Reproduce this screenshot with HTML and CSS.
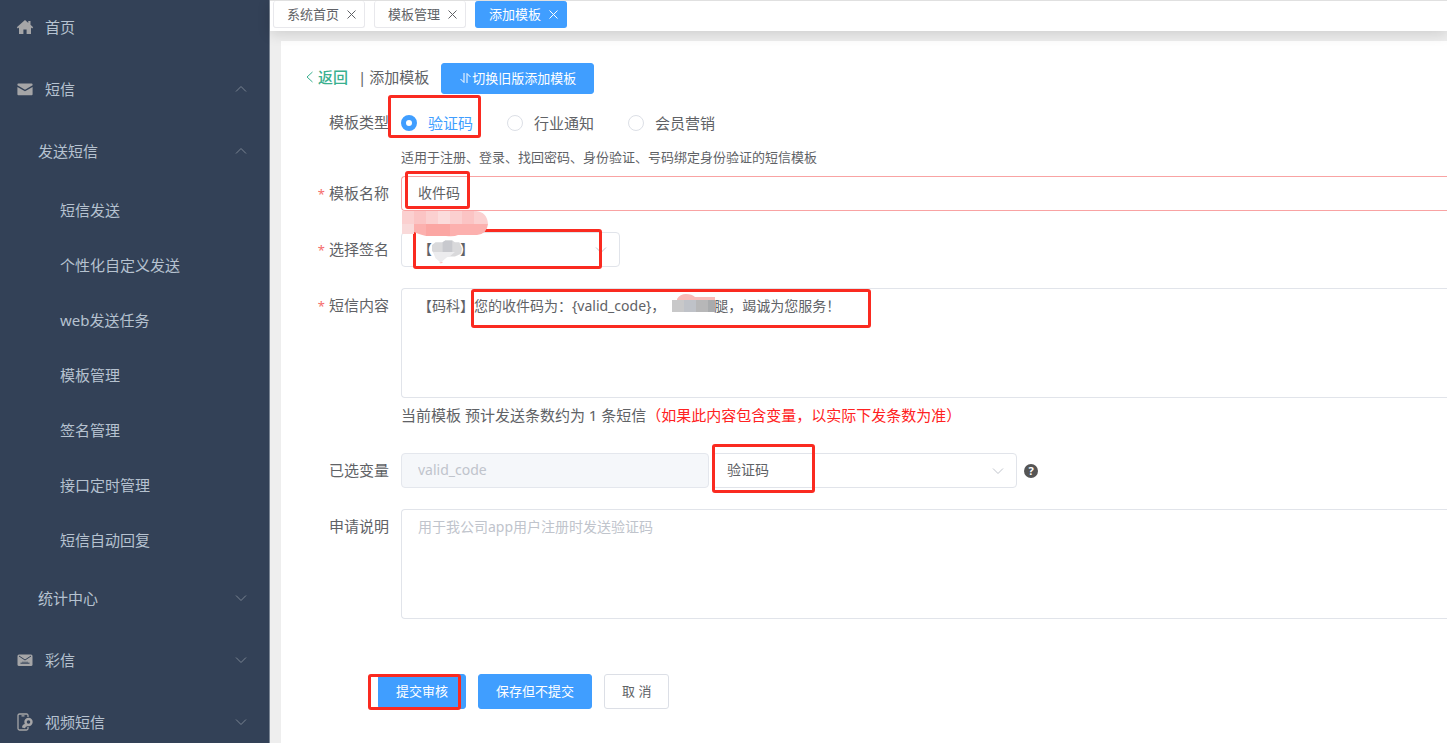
FILE: index.html
```html
<!DOCTYPE html>
<html lang="zh-CN">
<head>
<meta charset="utf-8">
<title>添加模板</title>
<link rel="stylesheet" href="styles.css">
</head>
<body>
<div class="app">
  <nav class="sidebar">
    <ul class="menu">
      <li><a class="item" href="#">
        <svg class="icon" viewBox="0 0 18 18"><path fill="currentColor" d="M9 2 .8 9.2l1.1 1.2L3 9.5V16h4.4v-4.6h3.2V16H15V9.5l1.1.9 1.1-1.2-2.7-2.4V3h-2.2v1.9z"/></svg>
        <span>首页</span></a></li>
      <li><a class="item" href="#">
        <svg class="icon" viewBox="0 0 18 18"><path fill="currentColor" d="M2.4 3.5h13.2q1 0 1 1v.8L9 9.8 1.400 5.300v-.8q0-1 1-1zM1.400 7 9 11.300 16.600 7v7.300q0 1-1 1H2.400q-1 0-1-1z"/></svg>
        <span>短信</span>
        <svg class="chevron" viewBox="0 0 12 8"><path d="M1 6.500 6 1.500l5 5"/></svg></a>
        <ul class="menu">
          <li><a class="item item-group" href="#"><span>发送短信</span>
            <svg class="chevron" viewBox="0 0 12 8"><path d="M1 6.500 6 1.500l5 5"/></svg></a>
            <ul class="menu">
              <li><a class="item item-leaf" href="#">短信发送</a></li>
              <li><a class="item item-leaf" href="#">个性化自定义发送</a></li>
              <li><a class="item item-leaf" href="#">web发送任务</a></li>
              <li><a class="item item-leaf" href="#">模板管理</a></li>
              <li><a class="item item-leaf" href="#">签名管理</a></li>
              <li><a class="item item-leaf" href="#">接口定时管理</a></li>
              <li><a class="item item-leaf" href="#">短信自动回复</a></li>
            </ul>
          </li>
          <li><a class="item item-group" href="#"><span>统计中心</span>
            <svg class="chevron" viewBox="0 0 12 8"><path d="m1 1.500 5 5 5-5"/></svg></a></li>
        </ul>
      </li>
      <li><a class="item" href="#">
        <svg class="icon" viewBox="0 0 18 18"><rect x="1.500" y="3.500" width="15" height="11.500" rx="1.500" fill="currentColor"/><path d="m3 5 6 4 6-4M4.500 12.200h9" fill="none" stroke="#334157" stroke-width="1"/><path d="M6 11.200h6" fill="none" stroke="#334157" stroke-width=".6"/></svg>
        <span>彩信</span>
        <svg class="chevron" viewBox="0 0 12 8"><path d="m1 1.500 5 5 5-5"/></svg></a></li>
      <li><a class="item" href="#">
        <svg class="icon" viewBox="0 0 18 18"><path d="M12 4V2.500q0-1.500-1.500-1.500H3.500Q2 1 2 2.500v13Q2 17 3.500 17h7q1.500 0 1.500-1.500V14M5.500 2.800h3" fill="none" stroke="currentColor" stroke-width="1.300"/><circle cx="12.500" cy="9" r="3" fill="none" stroke="currentColor" stroke-width="2.400"/><path d="M6 14.500q0-3 3.500-3.800l2 2.500q-2 .2-2.500 2z" fill="currentColor"/></svg>
        <span>视频短信</span>
        <svg class="chevron" viewBox="0 0 12 8"><path d="m1 1.500 5 5 5-5"/></svg></a></li>
    </ul>
  </nav>

  <div class="main">
    <header class="tabs">
      <a class="tab" href="#">系统首页<svg class="close" viewBox="0 0 9 9"><path d="m.5.5 8 8m0-8-8 8"/></svg></a>
      <a class="tab" href="#">模板管理<svg class="close" viewBox="0 0 9 9"><path d="m.5.5 8 8m0-8-8 8"/></svg></a>
      <a class="tab tab-active" href="#">添加模板<svg class="close" viewBox="0 0 9 9"><path d="m.5.5 8 8m0-8-8 8"/></svg></a>
    </header>

    <main class="card">
      <div class="head">
        <a class="back" href="#"><svg class="back-arrow" viewBox="0 0 8 12"><path d="M7 1 1.500 6 7 11"/></svg>返回</a>
        <h1 class="title"><span>|</span><span>添加模板</span></h1>
        <button class="btn btn-primary btn-switch" type="button"><svg class="switch-icon" viewBox="0 0 12 12"><path d="M4.500 1v9.500L1 7M7.500 11V1.500L11 5"/></svg>切换旧版添加模板</button>
      </div>

      <form class="form">
        <div class="row row-type">
          <span class="label" id="type-label">模板类型</span>
          <div class="radios" role="radiogroup" aria-labelledby="type-label">
            <label class="radio"><input type="radio" name="type" checked><span>验证码</span><i class="mark mark-type"></i></label>
            <label class="radio"><input type="radio" name="type"><span>行业通知</span></label>
            <label class="radio"><input type="radio" name="type"><span>会员营销</span></label>
          </div>
        </div>
        <p class="tip">适用于注册、登录、找回密码、身份验证、号码绑定身份验证的短信模板</p>

        <div class="row row-name">
          <label class="label required" for="name">模板名称</label>
          <div class="field">
            <input class="control control-error" id="name" type="text" value="收件码">
            <svg class="mosaic mosaic-error" viewBox="0 0 86 27">
              <path fill="#fbd0d0" d="M0 1h74q11 1 12 13H0z"/><path fill="#f9dada" d="M0 14h12v10H0z"/>
              <path fill="#fcb0ae" d="M12 14h74q-1 10-11 11H56q-4 2-12 1H24q-8-2-12-4z"/>
              <path fill="#fbc4c4" d="M12 1h12v13H12zM60 1h12v13H60z"/><path fill="#fbdcdc" d="M36 1h12v13H36z"/><path fill="#fba6a3" d="M24 14h24v12H24z"/>
            </svg>
            <i class="mark mark-name"></i>
          </div>
        </div>

        <div class="row">
          <label class="label required" for="sign">选择签名</label>
          <div class="field field-select field-sign">
            <select class="control" id="sign"><option>【　　】</option></select>
            <svg class="arrow" viewBox="0 0 12 8"><path d="m1 1.500 5 5 5-5"/></svg>
            <svg class="mosaic mosaic-sign" viewBox="0 0 34 26">
              <path fill="#d9d9db" d="m0 5 4-3h8l3-2h8l3 2h5l3 7-1 6-7 3H6L0 12z"/><path fill="#c8c9ce" d="M12 2 15 0h8v13H12z"/>
              <path fill="#ececee" d="M1 13h25l-6 5-3 1-7 6-6-5z"/><path fill="#f3b9b5" d="m8 24 2 1 2-1v1l-2 1z"/>
            </svg>
            <i class="mark mark-sign"></i>
          </div>
        </div>

        <div class="row">
          <label class="label required" for="content">短信内容</label>
          <div class="field">
            <textarea class="control area" id="content">【码科】您的收件码为：{valid_code}，　　　　腿，竭诚为您服务！</textarea>
            <svg class="mosaic mosaic-content" viewBox="0 0 44 19">
              <path fill="#f7bdba" d="M5 5q3-5 9-5t9 3h20v3H5z"/><path fill="#c8c8c9" d="M0 6h12v12H0z"/><path fill="#bfc2c8" d="M12 6h12v12H12z"/><path fill="#b7b7b8" d="M24 6h12v12H24z"/><path fill="#a9abad" d="M36 6h7v12h-7z"/>
            </svg>
            <i class="mark mark-content"></i>
          </div>
        </div>
        <p class="count">当前模板 预计发送条数约为 1 条短信<span class="warn">（如果此内容包含变量，以实际下发条数为准）</span></p>

        <div class="row row-var">
          <label class="label" for="var-type">已选变量</label>
          <div class="var-group">
            <input class="control var-name" type="text" value="valid_code" aria-label="变量名" disabled>
            <div class="field field-select field-var">
              <select class="control" id="var-type"><option>验证码</option></select>
              <svg class="arrow" viewBox="0 0 12 8"><path d="m1 1.500 5 5 5-5"/></svg>
              <i class="mark mark-var"></i>
            </div>
            <span class="help">?</span>
          </div>
        </div>

        <div class="row">
          <label class="label" for="remark">申请说明</label>
          <div class="field"><textarea class="control area area-remark" id="remark" placeholder="用于我公司app用户注册时发送验证码"></textarea></div>
        </div>

        <div class="actions">
          <div class="submit"><button class="btn btn-primary" type="button">提交审核</button><i class="mark mark-submit"></i></div>
          <button class="btn btn-primary" type="button">保存但不提交</button>
          <button class="btn" type="button">取 消</button>
        </div>
      </form>
    </main>
  </div>
</div>
</body>
</html>
```
FILE: styles.css
```css
* { box-sizing: border-box; }

body {
  margin: 0;
  overflow: hidden;
  background: #eee;
  color: #606266;
  font: 15px/20px "Noto Sans", "Noto Sans CJK SC", sans-serif;
}

a { color: inherit; text-decoration: none; }
button, input, select, textarea { font-family: inherit; }

.app { display: flex; height: 100vh; overflow: hidden; }

/* Sidebar */
.sidebar {
  flex: none;
  width: 270px;
  background: #334157;
  border-right: 1px solid #7a8594;
  color: #b6c2d0;
  overflow: hidden;
}
.menu { list-style: none; margin: 0; padding: 0; }
.sidebar > .menu { margin-top: -4px; }
.item {
  display: flex;
  align-items: center;
  height: 62px;
  padding: 0 22px 0 16px;
}
.item-group { padding-left: 38px; }
.item-leaf { height: 55px; padding-left: 60px; }
.icon { width: 18px; height: 18px; margin-right: 11px; color: #a5a5a7; }
.chevron {
  width: 12px;
  height: 8px;
  margin-left: auto;
  fill: none;
  stroke: #7a8492;
  stroke-width: 1;
}

/* Tabs */
.main { flex: 1; min-width: 0; display: flex; flex-direction: column; }
.tabs {
  position: relative;
  display: flex;
  gap: 9px;
  height: 31px;
  padding: 0 3px 3px;
  background: #fff;
  border-top: 1px solid #e0e0e0;
  box-shadow: 0 3px 14px rgba(0, 0, 0, .14);
}
.tab {
  display: flex;
  align-items: center;
  gap: 8px;
  padding: 0 8px 0 13px;
  border: 1px solid #e8e8ec;
  border-top: 0;
  border-radius: 3px;
  font-size: 13px;
}
.tab-active { background: #409eff; border-color: #409eff; color: #fff; }
.close { width: 9px; height: 9px; fill: none; stroke: currentColor; stroke-width: 1; }

/* Card */
.card {
  flex: 1;
  margin: 10px 0 0 11px;
  padding: 22px 0 0 24px;
  background: #fff;
}
.head { display: flex; align-items: center; height: 31px; line-height: 28px; }
.back, .title { height: 31px; }
.back { display: flex; align-items: center; gap: 4px; padding-bottom: 3px; color: #39b08f; font-weight: 500; }
.back-arrow { width: 9px; height: 12px; fill: none; stroke: currentColor; stroke-width: 1; }
.title { display: flex; gap: 3px; margin: 0 12px 0 10px; font-size: 15px; font-weight: 400; }

.btn {
  height: 35px;
  padding: 0 17px 2px;
  border: 1px solid #dcdfe6;
  border-radius: 3px;
  background: #fff;
  color: #606266;
  font-size: 13px;
}
.btn-primary { background: #409eff; border-color: #409eff; color: #fff; }
.btn-switch { display: flex; align-items: center; height: 31px; }
.switch-icon { width: 13px; height: 12px; fill: none; stroke: currentColor; stroke-width: 1; }

/* Form */
.form { margin: 0; }
.row {
  display: grid;
  grid-template-columns: 84px minmax(0, 1fr);
  column-gap: 12px;
  margin-top: 21px;
}
.label { height: 35px; text-align: right; line-height: 34px; white-space: nowrap; }
.required::before { content: "*"; margin-right: 4px; color: #f56c6c; font-size: 13px; }

.row-type { margin-top: 14px; height: 30px; }
.row-type .label { height: 30px; line-height: 29px; }
.radios { display: flex; gap: 34px; height: 30px; }
.radio { position: relative; display: flex; align-items: center; gap: 11px; }
.radio input {
  appearance: none;
  width: 16px;
  height: 16px;
  margin: 0;
  border: 1px solid #dcdfe6;
  border-radius: 50%;
  background: #fff;
}
.radio input:checked { border: 5px solid #409eff; }
.radio input:checked + span { color: #409eff; }

.tip { margin: 9px 0 0 96px; font-size: 13px; }
.row-name { margin-top: 9px; }

.field { position: relative; display: flex; }
.control {
  width: 100%;
  height: 35px;
  padding: 0 16px 3px;
  border: 1px solid #e1e4ea;
  border-radius: 4px;
  outline: 0;
  background: #fff;
  color: #606266;
  font-size: 14px;
  appearance: none;
}
.field > input.control, .field > .area { border-right: 0; border-radius: 4px 0 0 4px; }
.control-error { border-color: #f9a3a3; }
.area { height: 110px; padding-top: 7px; line-height: 20px; resize: none; }
.area::placeholder { color: #c0c4cc; }
.field-sign { width: 219px; }
.arrow {
  position: absolute;
  top: 14px;
  right: 13px;
  width: 12px;
  height: 8px;
  fill: none;
  stroke: #c0c4cc;
}

.count { margin: 7px 0 0 96px; }
.warn { color: #f22; }

.row-var { margin-top: 28px; }
.var-group { display: flex; align-items: center; }
.var-name { width: 308px; margin-right: 3px; }
.var-name:disabled { background: #f5f7fa; border-color: #e4e7ed; color: #c0c4cc; }
.field-var { width: 305px; }
.field-var .control { padding-left: 14px; }
.help {
  width: 14px;
  height: 14px;
  margin-left: 7px;
  border-radius: 50%;
  background: #555;
  color: #fff;
  font-size: 11px;
  font-weight: 700;
  line-height: 14px;
  text-align: center;
}

.actions { display: flex; gap: 12px; margin: 55px 0 0 73px; }
.submit { position: relative; }

/* Annotations laid over the form */
.mark {
  position: absolute;
  border: 3px solid #fa2a20;
  border-radius: 3px;
  pointer-events: none;
}
.mark-type { top: -13px; left: -13px; width: 93px; height: 43px; }
.mark-name { top: -5px; left: 4px; width: 65px; height: 38px; }
.mark-sign { top: -3px; left: 12px; width: 189px; height: 40px; }
.mark-content { top: 1px; left: 70px; width: 400px; height: 39px; }
.mark-var { top: -9px; left: 0; width: 103px; height: 49px; }
.mark-submit { top: 0; left: -10px; width: 93px; height: 36px; }
.mosaic { position: absolute; }
.mosaic-error { top: 34px; left: 1px; width: 86px; height: 27px; z-index: 1; }
.mosaic-sign { top: 7px; left: 31px; width: 30px; height: 26px; }
.mosaic-content { top: 6px; left: 271px; width: 44px; height: 19px; }
```
